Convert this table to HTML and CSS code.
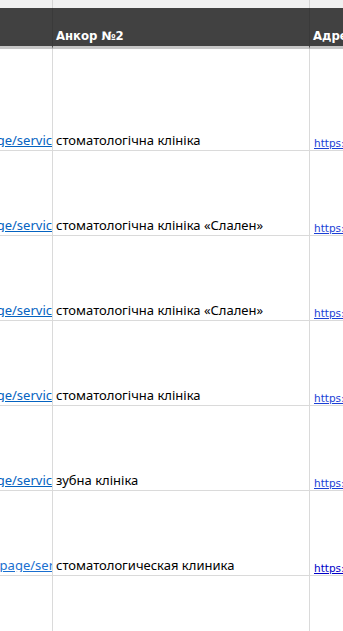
FILE: index.html
```html
<!DOCTYPE html>
<html>
<head>
<meta charset="utf-8">
<link rel="stylesheet" href="styles.css">
</head>
<body>
<div class="sheet">
  <div class="cell top"></div><div class="cell top"></div><div class="cell top last"></div>
  <div class="cell head"></div><div class="cell head">Анкор №2</div><div class="cell head last">Адреса</div>
  <div class="cell row first"><span class="clip"><a>https://slalen.com.ua/page/servic</a></span></div>
  <div class="cell row first">стоматологічна клініка</div>
  <div class="cell row first last"><a class="url">https://slalen.com.ua/</a></div>

  <div class="cell row"><span class="clip"><a>https://slalen.com.ua/page/servic</a></span></div>
  <div class="cell row">стоматологічна клініка «Слален»</div>
  <div class="cell row last"><a class="url">https://slalen.com.ua/</a></div>

  <div class="cell row"><span class="clip"><a>https://slalen.com.ua/page/servic</a></span></div>
  <div class="cell row">стоматологічна клініка «Слален»</div>
  <div class="cell row last"><a class="url">https://slalen.com.ua/</a></div>

  <div class="cell row"><span class="clip"><a>https://slalen.com.ua/page/servic</a></span></div>
  <div class="cell row">стоматологічна клініка</div>
  <div class="cell row last"><a class="url">https://slalen.com.ua/</a></div>

  <div class="cell row"><span class="clip"><a>https://slalen.com.ua/page/servic</a></span></div>
  <div class="cell row">зубна клініка</div>
  <div class="cell row last"><a class="url">https://slalen.com.ua/</a></div>

  <div class="cell row"><span class="clip"><a class="alt">https://slalen.com.ua/ru/page/ser</a></span></div>
  <div class="cell row">стоматологическая клиника</div>
  <div class="cell row last"><a class="url dark">https://slalen.com.ua/</a></div>

  <div class="cell row"></div><div class="cell row"></div><div class="cell row last"></div>
</div>
</body>
</html>
```
FILE: styles.css
```css
html, body {
  margin: 0;
  padding: 0;
  background: #ffffff;
  overflow: hidden;
}
.sheet {
  display: grid;
  grid-template-columns: 53px 257px 1fr;
  font-family: "Noto Sans", "Open Sans", sans-serif;
  font-size: 13px;
  line-height: 14px;
  color: #000;
  width: 343px;
}
.cell {
  border-right: 1px solid #dadada;
  box-sizing: border-box;
  display: flex;
  align-items: flex-end;
  white-space: nowrap;
  overflow: hidden;
  min-width: 0;
}
.cell.last {
  border-right: none;
}
.top {
  height: 8px;
  background: #f0f0f0;
  border-right-color: #d4d4d4;
}
.head {
  height: 41px;
  background: #414141;
  border-right-color: #3a3a3a;
  border-bottom: 3px solid #c6c6c6;
  color: #fff;
  font-family: "DejaVu Sans", sans-serif;
  font-weight: bold;
  font-size: 11.7px;
  line-height: 14px;
  padding: 0 0 3px 3px;
}
.row {
  height: 85px;
  border-bottom: 1px solid #dadada;
  padding: 0 0 3px 3px;
}
.row.first {
  height: 102px;
}
.clip {
  display: flex;
  justify-content: flex-end;
  width: 100%;
  overflow: hidden;
}
.row:nth-child(3n+1) {
  padding-left: 0;
}
a {
  color: #0563c1;
  text-decoration: underline;
  white-space: nowrap;
  flex-shrink: 0;
}
a.alt {
  color: #1a6fd0;
  margin-right: -2px;
}
.url {
  font-family: "DejaVu Sans", sans-serif;
  font-size: 10.5px;
  line-height: 12px;
  color: #1a3fd6;
  margin-left: 1px;
  margin-bottom: -2px;
}
.url.dark {
  color: #0000c8;
}
```
